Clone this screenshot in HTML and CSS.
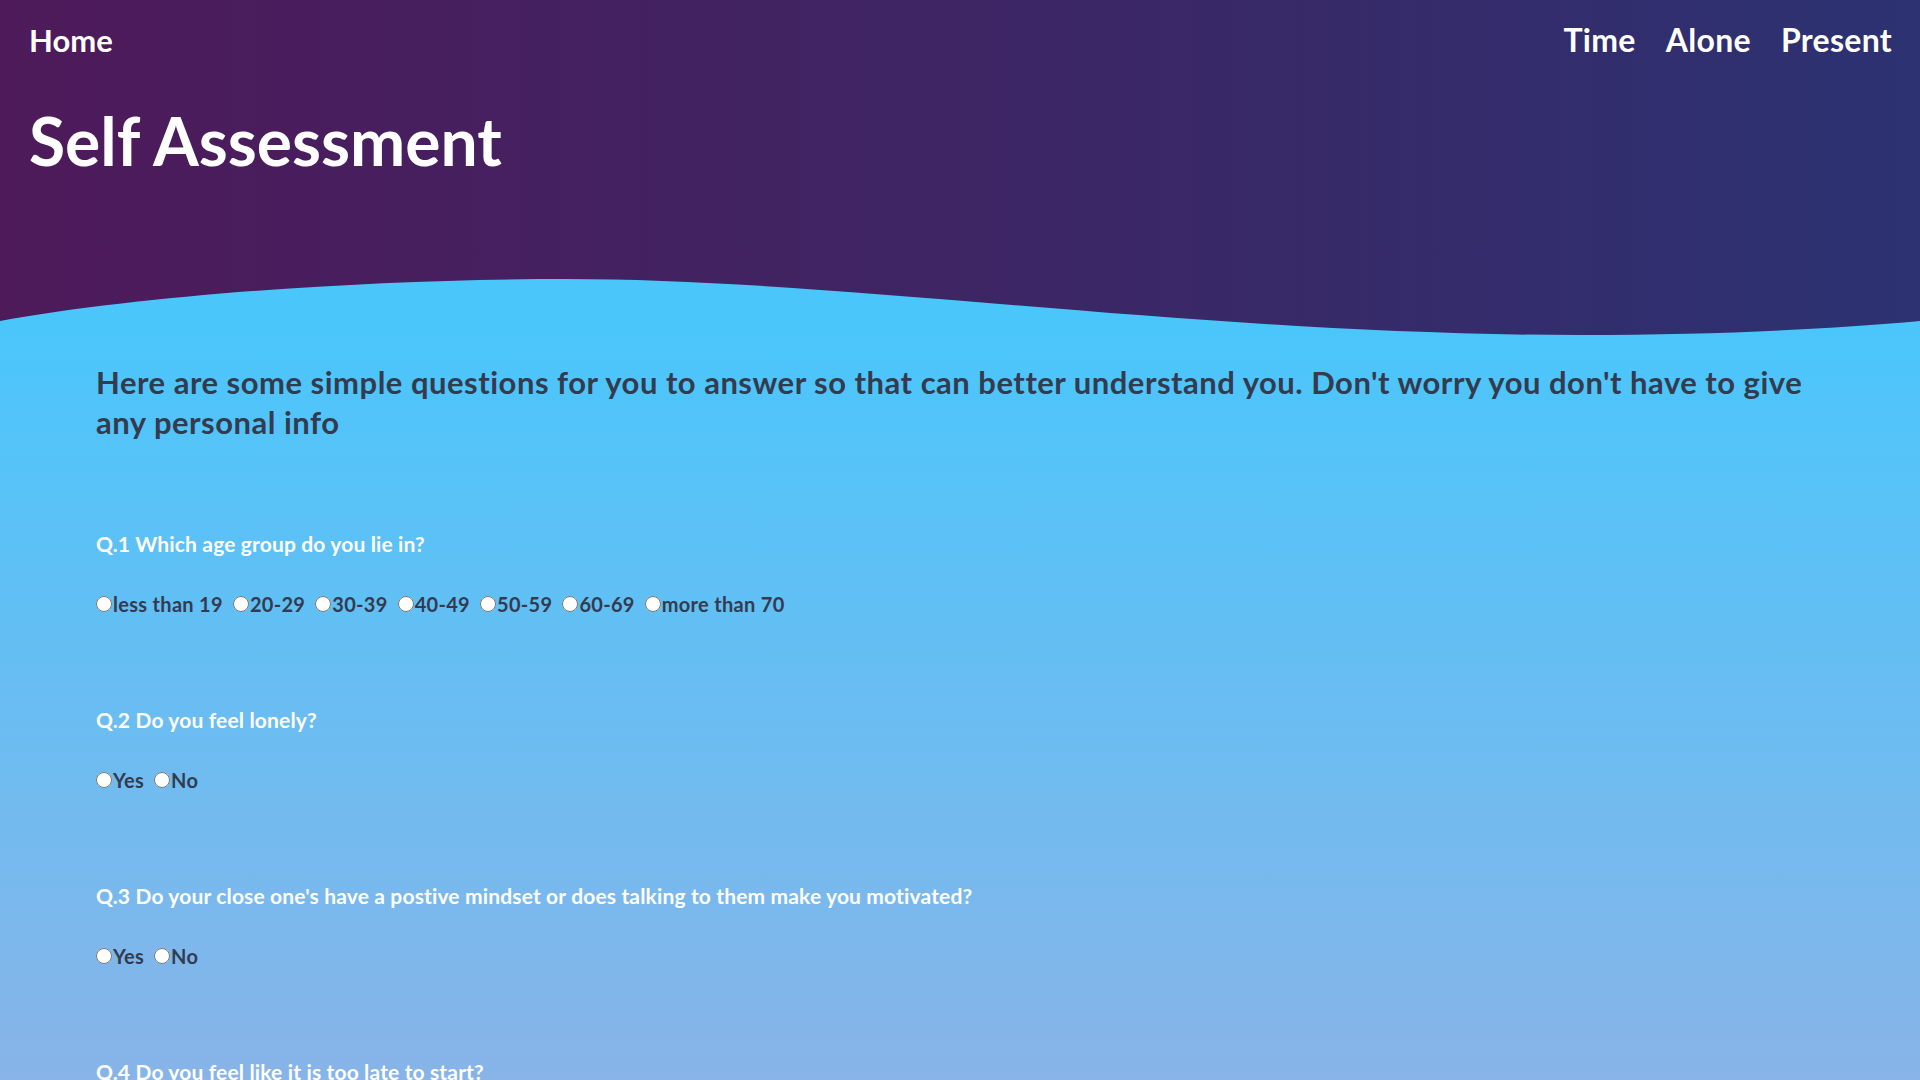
FILE: index.html
```html
<!DOCTYPE html>
<html lang="en">
<head>
<meta charset="utf-8">
<title>Self Assessment</title>
<link rel="stylesheet" href="styles.css">
</head>
<body>
<header class="hero">
  <nav class="nav">
    <a class="nav-link nav-home" href="#">Home</a>
    <div class="nav-right">
      <a class="nav-link" href="#">Time</a>
      <a class="nav-link" href="#">Alone</a>
      <a class="nav-link" href="#">Present</a>
    </div>
  </nav>
  <h1 class="title">Self Assessment</h1>
  <svg class="wave" viewBox="0 0 1920 56" preserveAspectRatio="none" aria-hidden="true">
    <path d="M0,42 C150,15 380,0 565,0 C850,0 1200,56 1580,56 C1720,56 1830,50 1920,42 L1920,56 L0,56 Z" fill="#4bc6fb"/>
  </svg>
</header>
<main class="content">
  <p class="intro">Here are some simple questions for you to answer so that can better understand you. Don't worry you don't have to give any personal info</p>
  <form class="questions">
    <div class="question">
      <p class="q-label">Q.1 Which age group do you lie in?</p>
      <div class="options">
        <label class="opt"><input type="radio" name="q1">less than 19</label>
        <label class="opt"><input type="radio" name="q1">20-29</label>
        <label class="opt"><input type="radio" name="q1">30-39</label>
        <label class="opt"><input type="radio" name="q1">40-49</label>
        <label class="opt"><input type="radio" name="q1">50-59</label>
        <label class="opt"><input type="radio" name="q1">60-69</label>
        <label class="opt"><input type="radio" name="q1">more than 70</label>
      </div>
    </div>
    <div class="question">
      <p class="q-label">Q.2 Do you feel lonely?</p>
      <div class="options">
        <label class="opt"><input type="radio" name="q2">Yes</label>
        <label class="opt"><input type="radio" name="q2">No</label>
      </div>
    </div>
    <div class="question">
      <p class="q-label">Q.3 Do your close one's have a postive mindset or does talking to them make you motivated?</p>
      <div class="options">
        <label class="opt"><input type="radio" name="q3">Yes</label>
        <label class="opt"><input type="radio" name="q3">No</label>
      </div>
    </div>
    <div class="question">
      <p class="q-label">Q.4 Do you feel like it is too late to start?</p>
      <div class="options">
        <label class="opt"><input type="radio" name="q4">Yes</label>
        <label class="opt"><input type="radio" name="q4">No</label>
      </div>
    </div>
  </form>
</main>
</body>
</html>
```
FILE: styles.css
```css
html {
  background: #4bc6fb;
}
body {
  margin: 0;
  font-family: "Lato", "Open Sans", sans-serif;
  font-weight: 700;
}
::-webkit-scrollbar {
  width: 4px;
  background: transparent;
}
::-webkit-scrollbar-track {
  background: transparent;
}
::-webkit-scrollbar-thumb {
  background: rgba(150, 152, 180, 0.75);
  border-radius: 2px;
}
.hero {
  height: 335px;
  display: flex;
  flex-direction: column;
  background: linear-gradient(to right, #4e1a5a 0%, #3e2564 50%, #2c3272 100%);
}
.nav {
  height: 80px;
  display: flex;
  align-items: center;
  justify-content: space-between;
  padding: 0 28px 0 29px;
}
.nav-right {
  display: flex;
  gap: 30px;
}
.nav-link {
  color: #ffffff;
  text-decoration: none;
  font-size: 32px;
  line-height: 40px;
  letter-spacing: 0.3px;
}
.nav-home {
  font-size: 31px;
  letter-spacing: 0;
}
.title {
  margin: 23px 0 0;
  padding-left: 29px;
  color: #ffffff;
  font-size: 66px;
  line-height: 76px;
  font-weight: 700;
}
.wave {
  display: block;
  margin-top: auto;
  width: 100%;
  height: 56px;
}
.content {
  padding: 27px 5% 1600px;
  background: linear-gradient(180deg, #4bc6fb 0px, #88b4e8 745px, #b3a6dc 2300px);
}
.intro {
  margin: 0;
  color: #343b4f;
  font-size: 31px;
  line-height: 40px;
  letter-spacing: 0.5px;
}
.questions {
  margin-top: 90px;
  display: flex;
  flex-direction: column;
  gap: 92px;
}
.q-label {
  margin: 0 0 36px;
  color: #ffffff;
  font-size: 21px;
  line-height: 24px;
  letter-spacing: 0.15px;
}
.options {
  display: flex;
  align-items: center;
  line-height: 24px;
}
.opt {
  display: inline-flex;
  align-items: center;
  margin-right: 10px;
  color: #343b4f;
  font-size: 20px;
  letter-spacing: 0.3px;
}
.opt input {
  width: 16px;
  height: 16px;
  margin: 0 1px 0 0;
}
```
